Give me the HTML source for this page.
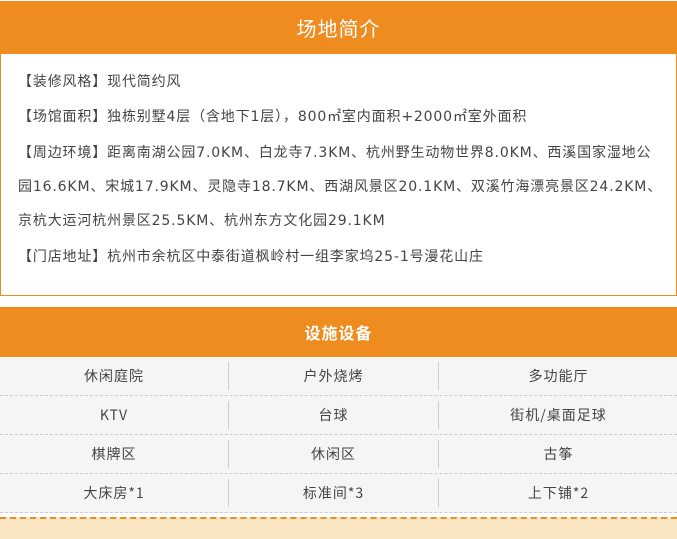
<!DOCTYPE html>
<html><head><meta charset="utf-8"><style>
body{margin:0;width:677px;height:537px;overflow:hidden;background:#fff;font-family:"Noto Sans CJK SC","Liberation Sans",sans-serif;}
.h{background:#ee8c1f;color:#fff;text-align:center;}
.h1{position:absolute;left:0;top:1px;width:677px;height:53px;line-height:53px;font-size:20px;letter-spacing:1px}
.box{position:absolute;left:0;top:54px;width:675px;height:241px;border:1px solid #ee8c1f;border-top:none;}
.box p{margin:0;position:absolute;left:17px;font-size:14px;line-height:20px;color:#444;white-space:nowrap;letter-spacing:0.85px;font-family:"DejaVu Sans","Noto Sans CJK SC",sans-serif}
.h2{position:absolute;left:0;top:307px;width:677px;height:50px;line-height:50px;font-size:16px;font-weight:bold;letter-spacing:1px}
.row{position:absolute;left:0;width:677px;height:38px;background:#f5f5f5;border-bottom:1px dashed #ccc;display:flex;}
.row div{flex:0 0 auto;text-align:center;line-height:38px;font-size:14px;color:#444;letter-spacing:1px}
.c1{width:228px}.c2{width:209px;border-left:1px solid #ccc;height:28px;margin-top:5px;line-height:28px!important}.c3{width:239px;border-left:1px solid #ccc;height:28px;margin-top:5px;line-height:28px!important}
.foot{position:absolute;left:0;top:517px;width:677px;height:20px;background:#fbe6c4;border-top:2px dashed #ee8c1f;}
</style></head><body>
<div class="h h1">场地简介</div>
<div class="box">
<p style="top:18px">【装修风格】现代简约风</p>
<p style="top:53px">【场馆面积】独栋别墅4层（含地下1层），800㎡室内面积+2000㎡室外面积</p>
<p style="top:89px">【周边环境】距离南湖公园7.0KM、白龙寺7.3KM、杭州野生动物世界8.0KM、西溪国家湿地公</p>
<p style="top:123px">园16.6KM、宋城17.9KM、灵隐寺18.7KM、西湖风景区20.1KM、双溪竹海漂亮景区24.2KM、</p>
<p style="top:157px">京杭大运河杭州景区25.5KM、杭州东方文化园29.1KM</p>
<p style="top:193px">【门店地址】杭州市余杭区中泰街道枫岭村一组李家坞25-1号漫花山庄</p>
</div>
<div class="h h2">设施设备</div>
<div class="row" style="top:357px"><div class="c1">休闲庭院</div><div class="c2">户外烧烤</div><div class="c3">多功能厅</div></div>
<div class="row" style="top:396px"><div class="c1">KTV</div><div class="c2">台球</div><div class="c3">街机/桌面足球</div></div>
<div class="row" style="top:435px"><div class="c1">棋牌区</div><div class="c2">休闲区</div><div class="c3">古筝</div></div>
<div class="row" style="top:474px"><div class="c1">大床房*1</div><div class="c2">标准间*3</div><div class="c3">上下铺*2</div></div>
<div class="foot"></div>
</body></html>
